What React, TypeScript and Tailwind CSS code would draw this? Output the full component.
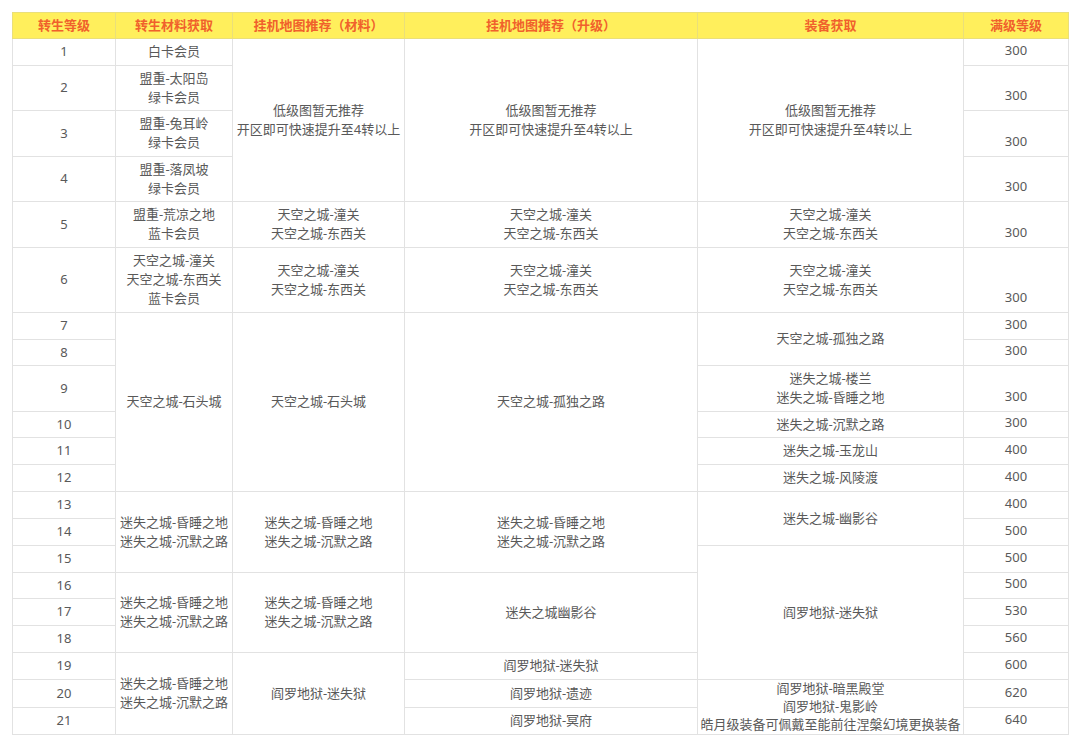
const HEAD = ["转生等级", "转生材料获取", "挂机地图推荐（材料）", "挂机地图推荐（升级）", "装备获取", "满级等级"];

const rowH = [
  "h-[27px]", "h-[45px]", "h-[46px]", "h-[45px]", "h-[46px]", "h-[65px]",
  "h-[27px]", "h-[26px]", "h-[46px]", "h-[26px]", "h-[27px]", "h-[27px]",
  "h-[27px]", "h-[27px]", "h-[27px]", "h-[26px]", "h-[27px]", "h-[27px]",
  "h-[27px]", "h-[27px]", "h-[26px]",
];

const maxLv = [300, 300, 300, 300, 300, 300, 300, 300, 300, 300, 400, 400, 400, 500, 500, 500, 530, 560, 600, 620, 640];

type Cell = { lines: string[]; span?: number; tight?: boolean };

const low = ["低级图暂无推荐", "开区即可快速提升至4转以上"];
const sky = ["天空之城-潼关", "天空之城-东西关"];
const lost = ["迷失之城-昏睡之地", "迷失之城-沉默之路"];

// cells per row for columns 2-5; missing keys are covered by a rowspan above
const body: Record<number, Cell[]> = {
  0: [{ lines: ["白卡会员"] }, { lines: low, span: 4 }, { lines: low, span: 4 }, { lines: low, span: 4 }],
  1: [{ lines: ["盟重-太阳岛", "绿卡会员"] }],
  2: [{ lines: ["盟重-兔耳岭", "绿卡会员"] }],
  3: [{ lines: ["盟重-落凤坡", "绿卡会员"] }],
  4: [{ lines: ["盟重-荒凉之地", "蓝卡会员"] }, { lines: sky }, { lines: sky }, { lines: sky }],
  5: [{ lines: ["天空之城-潼关", "天空之城-东西关", "蓝卡会员"] }, { lines: sky }, { lines: sky }, { lines: sky }],
  6: [
    { lines: ["天空之城-石头城"], span: 6 },
    { lines: ["天空之城-石头城"], span: 6 },
    { lines: ["天空之城-孤独之路"], span: 6 },
    { lines: ["天空之城-孤独之路"], span: 2 },
  ],
  7: [],
  8: [{ lines: ["迷失之城-楼兰", "迷失之城-昏睡之地"] }],
  9: [{ lines: ["迷失之城-沉默之路"] }],
  10: [{ lines: ["迷失之城-玉龙山"] }],
  11: [{ lines: ["迷失之城-风陵渡"] }],
  12: [{ lines: lost, span: 3 }, { lines: lost, span: 3 }, { lines: lost, span: 3 }, { lines: ["迷失之城-幽影谷"], span: 2 }],
  13: [],
  14: [{ lines: ["阎罗地狱-迷失狱"], span: 5 }],
  15: [{ lines: lost, span: 3 }, { lines: lost, span: 3 }, { lines: ["迷失之城幽影谷"], span: 3 }],
  16: [],
  17: [],
  18: [{ lines: lost, span: 3 }, { lines: ["阎罗地狱-迷失狱"], span: 3 }, { lines: ["阎罗地狱-迷失狱"] }],
  19: [
    { lines: ["阎罗地狱-遗迹"] },
    { lines: ["阎罗地狱-暗黑殿堂", "阎罗地狱-鬼影岭", "皓月级装备可佩戴至能前往涅槃幻境更换装备"], span: 2, tight: true },
  ],
  20: [{ lines: ["阎罗地狱-冥府"] }],
};

const td = "border border-[#e2e2e2] p-0 text-center align-middle whitespace-nowrap";

export default function App() {
  return (
    <div
      className="min-h-[745px] w-[1080px] bg-white pt-[12px] pl-[12px] text-[13px] leading-[19px] text-[#595959]"
      style={{ fontFamily: '"Noto Sans", "Noto Sans CJK SC", sans-serif' }}
    >
      <table className="w-[1056px] table-fixed border-collapse">
        <colgroup>
          <col className="w-[103px]" />
          <col className="w-[117px]" />
          <col className="w-[172px]" />
          <col className="w-[293px]" />
          <col className="w-[266px]" />
          <col className="w-[105px]" />
        </colgroup>
        <thead>
          <tr className="h-[26px] bg-[#ffef5c]">
            {HEAD.map((h) => (
              <th key={h} className="border border-[#eadf7a] text-center align-middle font-bold text-[#f0612c]">
                {h}
              </th>
            ))}
          </tr>
        </thead>
        <tbody>
          {maxLv.map((lv, i) => (
            <tr key={i} className={rowH[i]}>
              <td className={td + " pb-[1px]"}>{i + 1}</td>
              {(body[i] || []).map((c, j) => (
                <td
                  key={j}
                  rowSpan={c.span}
                  className={c.tight ? td + " leading-[17px]" : td + " pb-[1px]"}
                >
                  {c.lines.map((l, k) => (
                    <div key={k} className={c.tight ? "h-[18px]" : ""}>{l}</div>
                  ))}
                </td>
              ))}
              <td className="border border-[#e2e2e2] pb-[5px] text-center align-bottom">{lv}</td>
            </tr>
          ))}
        </tbody>
      </table>
    </div>
  );
}
